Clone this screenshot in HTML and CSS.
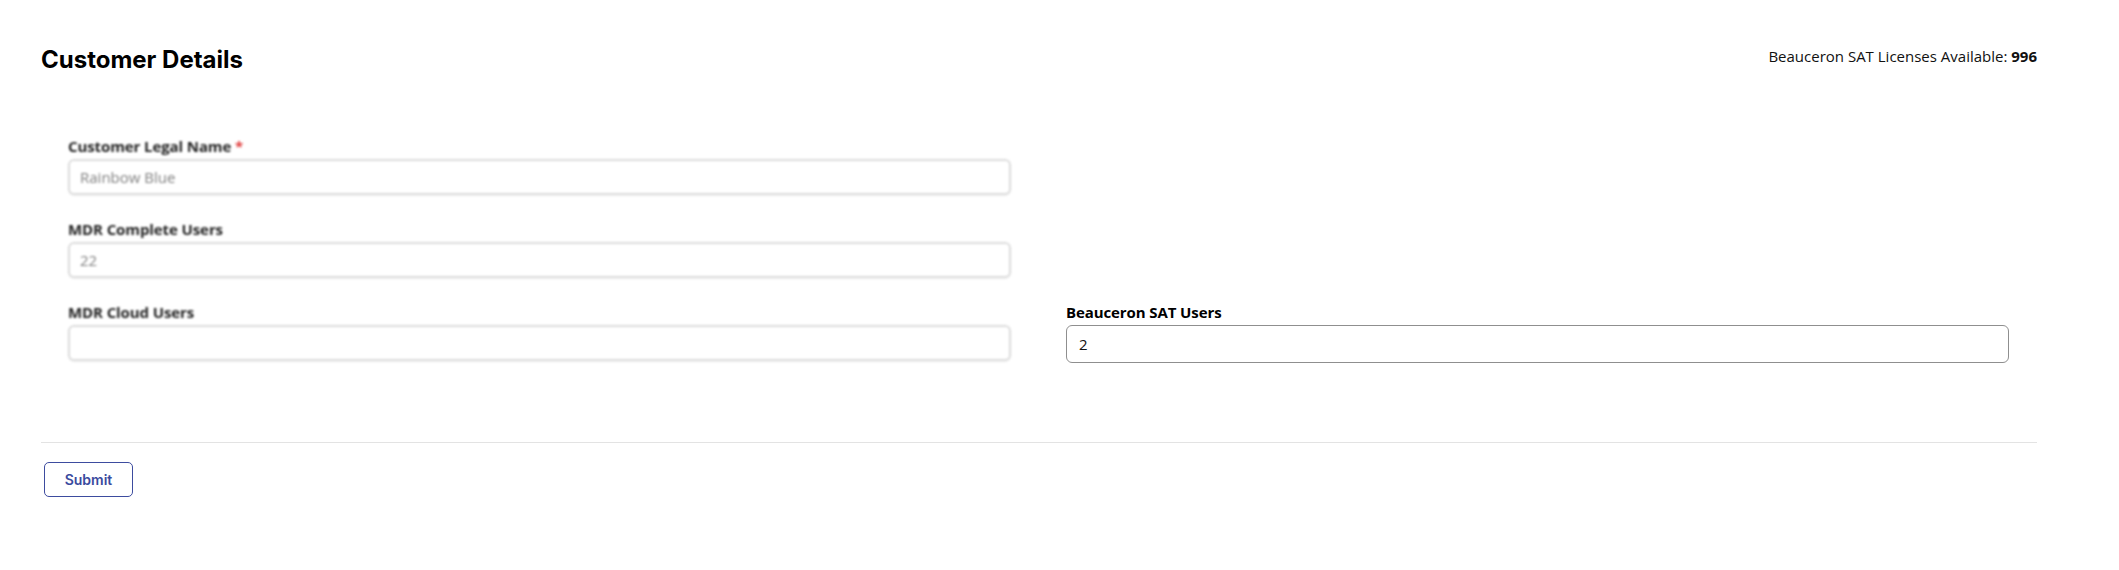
FILE: index.html
```html
<!DOCTYPE html>
<html lang="en">
<head>
<meta charset="utf-8">
<title>Customer Details</title>
<link rel="stylesheet" href="styles.css">
</head>
<body>
<div class="page">
  <header class="header">
    <h1 class="title">Customer Details</h1>
    <div class="licenses">Beauceron SAT Licenses Available: <b>996</b></div>
  </header>
  <form class="form">
    <div class="field blurred f1">
      <label class="label">Customer Legal Name <span class="req">*</span></label>
      <div class="input ghost"><span class="val">Rainbow Blue</span></div>
    </div>
    <div class="field blurred f2">
      <label class="label">MDR Complete Users</label>
      <div class="input ghost"><span class="val">22</span></div>
    </div>
    <div class="field blurred f3">
      <label class="label">MDR Cloud Users</label>
      <div class="input ghost"></div>
    </div>
    <div class="field f4">
      <label class="label sharp">Beauceron SAT Users</label>
      <div class="input real"><span class="val dark">2</span></div>
    </div>
  </form>
  <hr class="divider">
  <button class="submit" type="button">Submit</button>
</div>
</body>
</html>
```
FILE: styles.css
```css
* { box-sizing: border-box; }
body {
  margin: 0;
  background: #ffffff;
  font-family: "Open Sans", "Noto Sans", sans-serif;
  color: #000;
}
.page {
  padding: 0 82px 0 41px;
}
.header {
  display: flex;
  justify-content: space-between;
  align-items: flex-start;
  padding-top: 45px;
}
.title {
  margin: 0;
  font-family: Inter, "Liberation Sans", sans-serif;
  font-weight: 700;
  font-size: 24px;
  line-height: 30px;
  color: #000;
}
.licenses {
  margin-top: 1px;
  font-size: 15px;
  line-height: 20px;
  color: #111;
}
.licenses b { font-weight: 700; }
.form {
  display: grid;
  grid-template-columns: 943px 943px;
  column-gap: 55px;
  row-gap: 26px;
  margin: 63px 0 0 27px;
}
.field { display: flex; flex-direction: column; }
.f1 { grid-row: 1; grid-column: 1; }
.f2 { grid-row: 2; grid-column: 1; }
.f3 { grid-row: 3; grid-column: 1; }
.f4 { grid-row: 3; grid-column: 2; }
.label {
  font-size: 15px;
  font-weight: 700;
  line-height: 16px;
  color: #222;
  margin-bottom: 5px;
  letter-spacing: -0.1px;
}
.label.sharp { color: #000; letter-spacing: -0.1px; }
.req { color: #e03a3a; }
.blurred { filter: blur(1.3px); }
.input {
  height: 36px;
  display: flex;
  align-items: center;
  padding: 0 10px;
  background: #fff;
  font-size: 15px;
}
.ghost {
  border: 2px solid #dcdcdc;
  border-radius: 6px;
  box-shadow: 0 1px 2px rgba(0,0,0,0.06);
}
.ghost .val { color: #7e7e7e; }
.real {
  height: 38px;
  border: 1px solid #8f8f8f;
  border-radius: 6px;
  padding: 0 12px;
}
.val.dark { color: #111; font-size: 15px; }
.divider {
  margin: 79px 0 19px 0;
  border: 0;
  border-top: 1px solid #e3e3e3;
}
.submit {
  margin-left: 3px;
  width: 89px;
  height: 35px;
  border: 1px solid #3d4c9f;
  border-radius: 5px;
  background: #fff;
  color: #3a4a9e;
  font-family: Inter, "Liberation Sans", sans-serif;
  font-weight: 600;
  font-size: 14px;
  cursor: pointer;
}
```
